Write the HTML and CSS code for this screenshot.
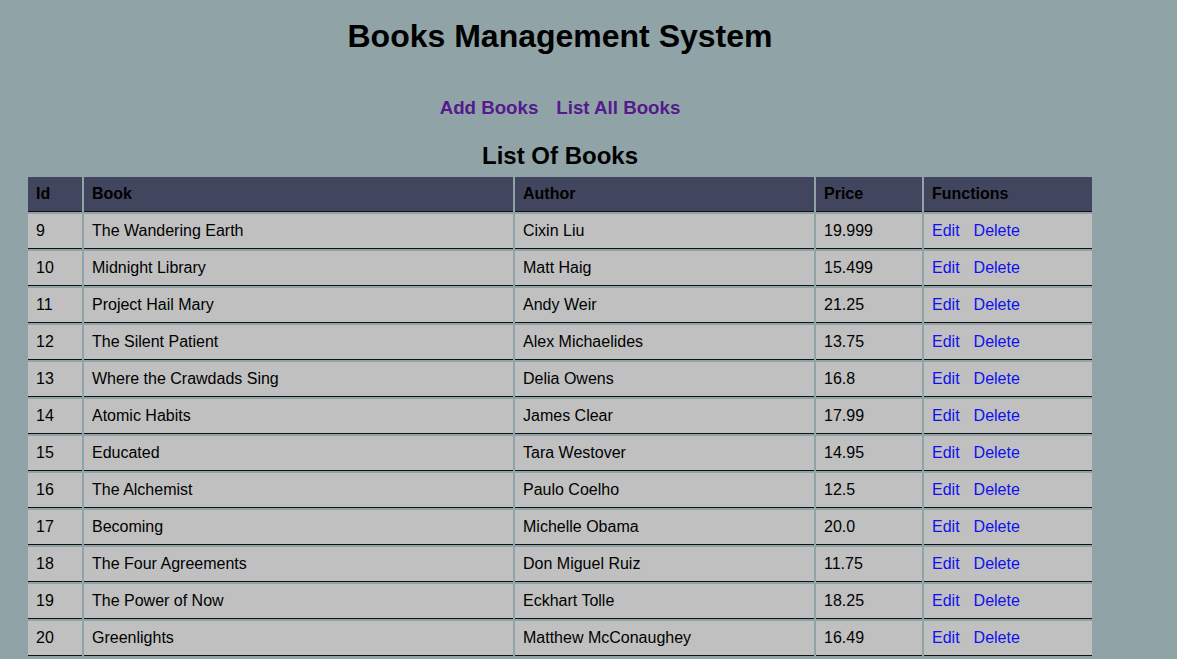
FILE: index.html
```html
<!DOCTYPE html>
<html lang="en">
<head>
<meta charset="utf-8">
<title>Books Management System</title>
<link rel="stylesheet" href="styles.css">
</head>
<body>
<div class="page">
  <h1 class="title">Books Management System</h1>
  <nav class="nav">
    <a href="#" class="nav-link">Add Books</a>
    <a href="#" class="nav-link">List All Books</a>
  </nav>
  <h2 class="subtitle">List Of Books</h2>
  <table class="books">
    <colgroup>
      <col class="c-id"><col class="c-book"><col class="c-author"><col class="c-price"><col class="c-fn">
    </colgroup>
    <thead>
      <tr><th>Id</th><th>Book</th><th>Author</th><th>Price</th><th>Functions</th></tr>
    </thead>
    <tbody>
      <tr><td>9</td><td>The Wandering Earth</td><td>Cixin Liu</td><td>19.999</td><td class="fn"><a href="#">Edit</a><a href="#">Delete</a></td></tr>
      <tr><td>10</td><td>Midnight Library</td><td>Matt Haig</td><td>15.499</td><td class="fn"><a href="#">Edit</a><a href="#">Delete</a></td></tr>
      <tr><td>11</td><td>Project Hail Mary</td><td>Andy Weir</td><td>21.25</td><td class="fn"><a href="#">Edit</a><a href="#">Delete</a></td></tr>
      <tr><td>12</td><td>The Silent Patient</td><td>Alex Michaelides</td><td>13.75</td><td class="fn"><a href="#">Edit</a><a href="#">Delete</a></td></tr>
      <tr><td>13</td><td>Where the Crawdads Sing</td><td>Delia Owens</td><td>16.8</td><td class="fn"><a href="#">Edit</a><a href="#">Delete</a></td></tr>
      <tr><td>14</td><td>Atomic Habits</td><td>James Clear</td><td>17.99</td><td class="fn"><a href="#">Edit</a><a href="#">Delete</a></td></tr>
      <tr><td>15</td><td>Educated</td><td>Tara Westover</td><td>14.95</td><td class="fn"><a href="#">Edit</a><a href="#">Delete</a></td></tr>
      <tr><td>16</td><td>The Alchemist</td><td>Paulo Coelho</td><td>12.5</td><td class="fn"><a href="#">Edit</a><a href="#">Delete</a></td></tr>
      <tr><td>17</td><td>Becoming</td><td>Michelle Obama</td><td>20.0</td><td class="fn"><a href="#">Edit</a><a href="#">Delete</a></td></tr>
      <tr><td>18</td><td>The Four Agreements</td><td>Don Miguel Ruiz</td><td>11.75</td><td class="fn"><a href="#">Edit</a><a href="#">Delete</a></td></tr>
      <tr><td>19</td><td>The Power of Now</td><td>Eckhart Tolle</td><td>18.25</td><td class="fn"><a href="#">Edit</a><a href="#">Delete</a></td></tr>
      <tr><td>20</td><td>Greenlights</td><td>Matthew McConaughey</td><td>16.49</td><td class="fn"><a href="#">Edit</a><a href="#">Delete</a></td></tr>
    </tbody>
  </table>
</div>
</body>
</html>
```
FILE: styles.css
```css
html {
  overflow: hidden;
  background: #90a3a7;
}
body {
  margin: 0;
  padding: 0 8px;
  background: #90a3a7;
  font-family: "Liberation Sans", Arial, sans-serif;
  color: #000;
}
.page {
  width: 1104px;
  display: flex;
  flex-direction: column;
  align-items: center;
}
.title {
  margin: 18px 0 0;
  font-size: 32px;
  line-height: 37px;
  font-weight: bold;
}
.nav {
  margin-top: 42px;
  display: flex;
  gap: 18px;
  font-size: 18.72px;
  line-height: 22px;
  font-weight: bold;
}
.nav-link {
  color: #551a8b;
  text-decoration: none;
}
.subtitle {
  margin: 23px 0 0;
  font-size: 24px;
  line-height: 28px;
  font-weight: bold;
}
.books {
  margin-top: 5px;
  table-layout: fixed;
  border-collapse: separate;
  border-spacing: 2px;
  width: 1068px;
  font-size: 16px;
  line-height: 18px;
}
.c-id { width: 54px; }
.c-book { width: 429px; }
.c-author { width: 299px; }
.c-price { width: 106px; }
.c-fn { width: 168px; }
.books th,
.books td {
  padding: 8px;
  text-align: left;
  border-bottom: 1px solid #111;
  white-space: nowrap;
}
.books th {
  background: #41465e;
  font-weight: bold;
}
.books td {
  background: #c0c0c0;
}
.fn a {
  color: #1010ee;
  text-decoration: none;
  margin-right: 14px;
}
```
